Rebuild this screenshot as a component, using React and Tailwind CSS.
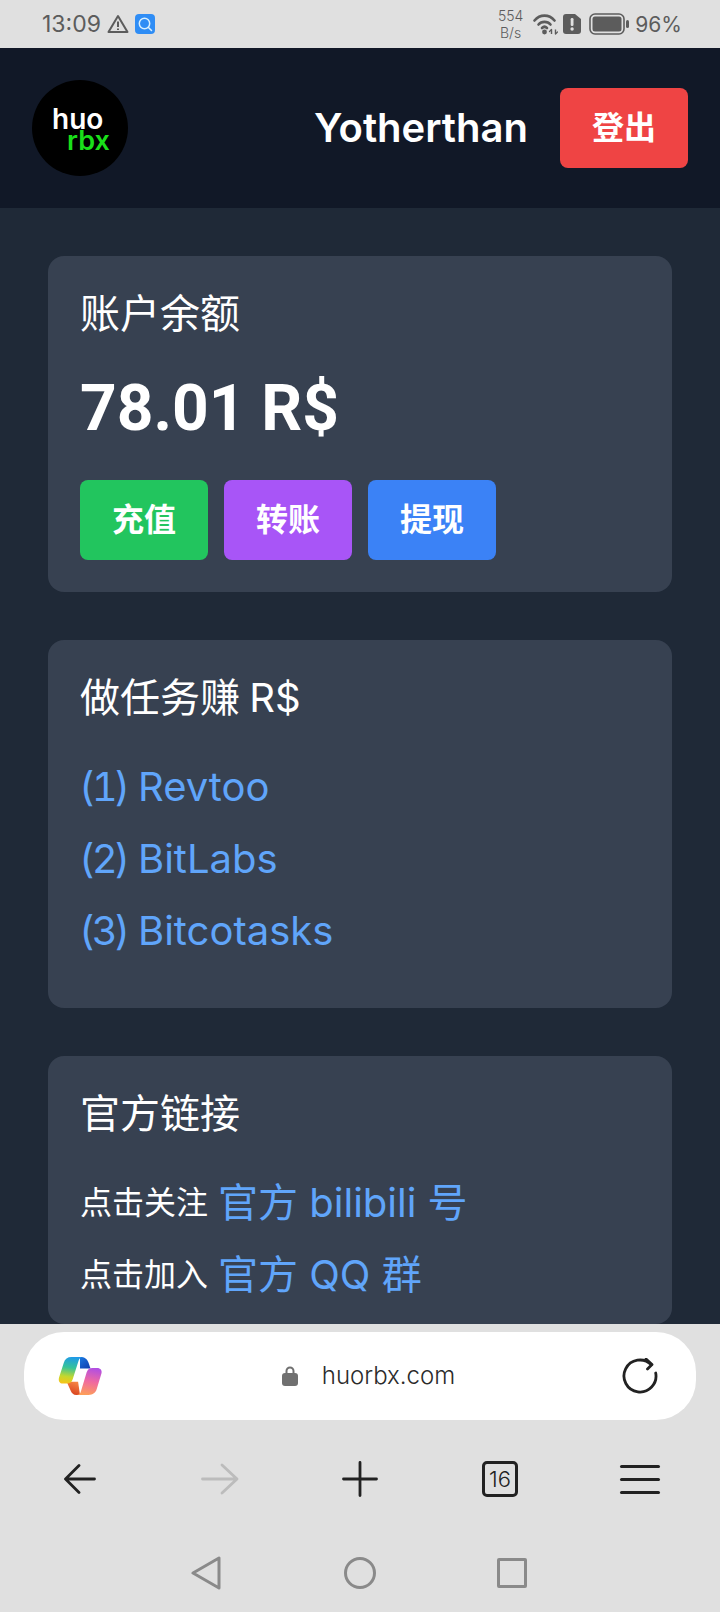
const FONT = 'font-["Inter","Noto_Sans_CJK_SC",sans-serif]'

function WarnIcon() {
  return (
    <svg width="22" height="20" viewBox="0 0 22 20" fill="none" stroke="#5c5c5c" strokeWidth="2" strokeLinejoin="round">
      <path d="M11 2 L20.5 18 H1.5 Z" />
      <path d="M11 7.5 V13" strokeWidth="2" />
      <path d="M11 14.5 V16" strokeWidth="2" />
    </svg>
  )
}

function SearchBadge() {
  return (
    <svg width="20" height="20" viewBox="0 0 20 20" fill="none">
      <rect width="20" height="20" rx="4" fill="#2f8df5" />
      <circle cx="9.5" cy="9.5" r="5.2" stroke="#d8efff" strokeWidth="1.5" />
      <path d="M13.5 13.5 L16.5 16.5" stroke="#d8efff" strokeWidth="1.5" strokeLinecap="round" />
    </svg>
  )
}

function WifiIcon() {
  return (
    <svg width="25" height="22" viewBox="0 0 25 22" fill="none" stroke="#5c5c5c" strokeWidth="2.6" strokeLinecap="round">
      <path d="M1.5 7.5 C7 1 16 1 21.5 7.5" />
      <path d="M5.5 11.5 C8.5 8 14.5 8 17.5 11.5" />
      <path d="M9 15 C10.5 13.5 12.5 13.5 14 15" />
      <circle cx="11.5" cy="19" r="2.4" fill="#5c5c5c" stroke="none" />
      <path d="M18.5 16.5 V21 M22.5 16.5 V21" strokeWidth="1.4" strokeLinecap="butt" />
      <path d="M16.5 18.5 L18.5 16.5 M22.5 21 L24.5 19" strokeWidth="1.2" />
    </svg>
  )
}

function AlertIcon() {
  return (
    <svg width="18" height="20" viewBox="0 0 18 20">
      <path d="M3 0 H12 L18 5 V17 A3 3 0 0 1 15 20 H3 A3 3 0 0 1 0 17 V3 A3 3 0 0 1 3 0 Z" fill="#5c5c5c" />
      <rect x="7.7" y="4" width="2.8" height="8" rx="1.2" fill="#e0e0e0" />
      <circle cx="9.1" cy="15" r="1.7" fill="#e0e0e0" />
    </svg>
  )
}

function BatteryIcon() {
  return (
    <svg width="40" height="22" viewBox="0 0 40 22" fill="none">
      <rect x="1" y="1" width="34" height="20" rx="5" stroke="#5c5c5c" strokeWidth="1.6" />
      <rect x="3.5" y="3.5" width="29" height="15" rx="2.5" fill="#5c5c5c" />
      <rect x="37" y="7" width="3" height="8" rx="1.5" fill="#5c5c5c" />
    </svg>
  )
}

function StatusBar() {
  return (
    <div className="flex h-12 shrink-0 items-center justify-between bg-[#e0e0e0] pl-[42px] pr-[38px] text-[#5c5c5c]">
      <div className="flex items-center">
        <span className="text-[23px] leading-none">13:09</span>
        <span className="ml-[6px]"><WarnIcon /></span>
        <span className="ml-[6px]"><SearchBadge /></span>
      </div>
      <div className="flex items-center">
        <div className="flex flex-col items-center text-[14px] font-light leading-[17px]">
          <span>554</span>
          <span>B/s</span>
        </div>
        <span className="ml-[10px]"><WifiIcon /></span>
        <span className="ml-[5px]"><AlertIcon /></span>
        <span className="ml-2"><BatteryIcon /></span>
        <span className="ml-[6px] text-[21px] leading-none">96%</span>
      </div>
    </div>
  )
}

function Header() {
  return (
    <header className="flex h-40 shrink-0 items-center justify-between bg-[#111827] px-8">
      <div className="flex h-24 w-24 flex-col justify-center rounded-full bg-black pl-5 pt-[3px] font-semibold">
        <span className="text-[28px] leading-[21px] text-white">huo</span>
        <span className="ml-[15px] text-[27px] leading-[21px] text-[#1adf1a]">rbx</span>
      </div>
      <div className="flex items-center gap-8">
        <span className="text-[40px] font-semibold text-white">Yotherthan</span>
        <button className="h-20 w-32 rounded-lg bg-[#ef4444] text-[32px] font-bold text-white">登出</button>
      </div>
    </header>
  )
}

function Card({ title, children }) {
  return (
    <section className="rounded-2xl bg-[#374151] px-8 pt-8 text-white">
      <h2 className="text-[40px] leading-[52px] [word-spacing:-2px]">{title}</h2>
      {children}
    </section>
  )
}

function LinkRow({ num, label }) {
  return (
    <div className="flex h-[72px] items-center text-[40px] text-[#60a5fa]">
      <span className="-ml-px w-[59px] tabular-nums tracking-[-3px]">{num}</span>
      <span>{label}</span>
    </div>
  )
}

function Main() {
  return (
    <main className="flex min-h-0 flex-1 flex-col gap-12 overflow-hidden bg-[#1f2937] px-12 pt-12">
      <Card title="账户余额">
        <div className='mt-[39px] font-["Roboto",sans-serif] text-[64px] font-bold leading-[60px]'>78.01 R$</div>
        <div className="mt-[41px] flex gap-4 pb-8">
          <button className="h-20 w-32 rounded-lg bg-[#22c55e] text-[32px] font-bold">充值</button>
          <button className="h-20 w-32 rounded-lg bg-[#a855f7] text-[32px] font-bold">转账</button>
          <button className="h-20 w-32 rounded-lg bg-[#3b82f6] text-[32px] font-bold">提现</button>
        </div>
      </Card>
      <Card title="做任务赚 R$">
        <div className="mt-[27px] pb-[41px]">
          <LinkRow num="(1)" label="Revtoo" />
          <LinkRow num="(2)" label="BitLabs" />
          <LinkRow num="(3)" label="Bitcotasks" />
        </div>
      </Card>
      <Card title="官方链接">
        <div className="mt-[27px] pb-[13px]">
          <div className="flex h-[72px] items-center gap-[10px] text-[32px]">
            <span>点击关注</span>
            <span className="text-[40px] text-[#60a5fa]">官方 bilibili 号</span>
          </div>
          <div className="flex h-[72px] items-center gap-[10px] text-[32px]">
            <span>点击加入</span>
            <span className="text-[40px] text-[#60a5fa]">官方 QQ 群</span>
          </div>
        </div>
      </Card>
    </main>
  )
}

function CopilotIcon() {
  return (
    <svg width="46" height="40" viewBox="0 0 48 42" fill="none">
      <defs>
        <linearGradient id="cpA" x1="16" y1="1" x2="12" y2="29" gradientUnits="userSpaceOnUse">
          <stop offset="0" stopColor="#1f9ae8" />
          <stop offset="0.4" stopColor="#35c39a" />
          <stop offset="0.75" stopColor="#c4d82e" />
          <stop offset="1" stopColor="#f5c518" />
        </linearGradient>
        <linearGradient id="cpB" x1="36" y1="12" x2="30" y2="41" gradientUnits="userSpaceOnUse">
          <stop offset="0" stopColor="#b04ee4" />
          <stop offset="0.5" stopColor="#f06aa0" />
          <stop offset="1" stopColor="#fd9f58" />
        </linearGradient>
        <linearGradient id="cpC" x1="24" y1="1" x2="34" y2="13" gradientUnits="userSpaceOnUse">
          <stop offset="0" stopColor="#1b78e0" />
          <stop offset="1" stopColor="#0f3eb0" />
        </linearGradient>
        <linearGradient id="cpD" x1="20" y1="26" x2="15" y2="41" gradientUnits="userSpaceOnUse">
          <stop offset="0" stopColor="#f98a45" />
          <stop offset="1" stopColor="#d63f1e" />
        </linearGradient>
      </defs>
      <path d="M24 1 C29 1 31.5 3 33 7 L35 13 L24 13 Z" fill="url(#cpC)" />
      <path d="M10 27 L22 27 L24 41 L20 41 C17 41 15.5 39 14.5 37 Z" fill="url(#cpD)" />
      <path d="M15 1 H27 C24.5 1 23 3 22.5 5 L16.5 24 C15.5 27.5 13.5 29 10 29 H6 C2.5 29 1 26 2 22.5 L7 7 C8 3 11 1 15 1 Z" fill="url(#cpA)" />
      <path d="M33 41 H20 C23 41 24.5 39 25 37 L31 17 C32 14 34 12.5 37 12.5 H42 C45.5 12.5 47.5 15 46.5 18.5 L41.5 35 C40.5 38.5 37.5 41 33 41 Z" fill="url(#cpB)" />
    </svg>
  )
}

function BrowserBar() {
  return (
    <div className="h-[288px] shrink-0 bg-[#e0e0e0]">
      <div className="px-6 pt-2">
        <div className="flex h-[88px] items-center justify-between rounded-[40px] bg-white pl-[33px] pr-[38px]">
          <CopilotIcon />
          <div className="ml-3 flex items-center gap-[24px]">
            <svg width="16" height="20" viewBox="0 0 16 20" fill="none">
              <path d="M4.5 9 V5 A3.5 3.5 0 0 1 11.5 5 V9" stroke="#707070" strokeWidth="2" />
              <rect y="7" width="16" height="13" rx="3" fill="#707070" />
            </svg>
            <span className="text-[24px] font-light text-[#2b2b2b]">huorbx.com</span>
          </div>
          <svg width="36" height="36" viewBox="0 0 36 36" fill="none" stroke="#222" strokeWidth="2.8" strokeLinecap="round" strokeLinejoin="round">
            <path d="M29.3 6.7 A16 16 0 1 0 33.7 15" />
            <path d="M24 1 L30 6.5 L25.5 11" />
          </svg>
        </div>
      </div>
      <nav className="mt-[27px] grid h-[64px] grid-cols-5 px-[10px]">
        <div className="flex items-center justify-center">
          <svg width="32" height="30" viewBox="0 0 32 30" fill="none" stroke="#222" strokeWidth="2.8" strokeLinecap="round" strokeLinejoin="round">
            <path d="M30.5 15 H2 M15 1.5 L1.5 15 L15 28.5" />
          </svg>
        </div>
        <div className="flex items-center justify-center">
          <svg width="38" height="32" viewBox="0 0 38 32" fill="none" stroke="#bcbcbc" strokeWidth="2.8" strokeLinecap="round" strokeLinejoin="round">
            <path d="M1.5 16 H36 M21 2 L36 16 L21 30" />
          </svg>
        </div>
        <div className="flex items-center justify-center">
          <svg width="36" height="36" viewBox="0 0 36 36" fill="none" stroke="#222" strokeWidth="2.8" strokeLinecap="round">
            <path d="M1.5 18 H34.5 M18 1.5 V34.5" />
          </svg>
        </div>
        <div className="flex items-center justify-center">
          <div className="flex h-9 w-9 items-center justify-center rounded-[5px] border-[3px] border-[#222] text-[22px] font-light leading-none text-[#222]">16</div>
        </div>
        <div className="flex items-center justify-center">
          <div className="flex w-10 flex-col gap-[10px]">
            <div className="h-[3px] rounded-full bg-[#222]" />
            <div className="h-[3px] rounded-full bg-[#222]" />
            <div className="h-[3px] rounded-full bg-[#222]" />
          </div>
        </div>
      </nav>
      <div className="mt-[45px] flex items-center pl-[191px]">
        <svg width="30" height="34" viewBox="0 0 30 34" fill="none" stroke="#8a8a8a" strokeWidth="3" strokeLinejoin="round">
          <path d="M28 2 V32 L2 17 Z" />
        </svg>
        <div className="ml-[123px] h-8 w-8 rounded-full border-[3px] border-[#8a8a8a]" />
        <div className="ml-[121px] h-[30px] w-[30px] rounded-[2px] border-[3px] border-[#8a8a8a]" />
      </div>
    </div>
  )
}

export default function App() {
  return (
    <div className={`flex h-[1612px] w-[720px] flex-col overflow-hidden ${FONT}`}>
      <StatusBar />
      <Header />
      <Main />
      <BrowserBar />
    </div>
  )
}
